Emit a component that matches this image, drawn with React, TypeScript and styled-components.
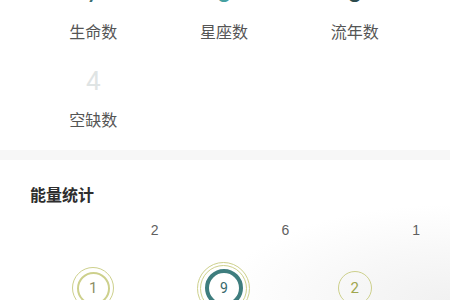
import React from "react";
import styled, { createGlobalStyle } from "styled-components";

const GlobalStyle = createGlobalStyle`
  html, body {
    margin: 0;
    padding: 0;
    background: #ffffff;
    overflow: hidden;
  }
  body {
    font-family: "Noto Sans CJK SC", "Noto Sans", sans-serif;
  }
`;

const Page = styled.div`
  width: 450px;
  height: 300px;
  overflow: hidden;
  background: #ffffff;
`;

const StatsGrid = styled.div`
  margin-top: -19px;
  padding: 0 30px 21px 28px;
  display: grid;
  grid-template-columns: repeat(3, 1fr);
  row-gap: 28px;
`;

const StatCell = styled.div`
  display: flex;
  flex-direction: column;
  align-items: center;
`;

const StatNumber = styled.div<{ $color: string }>`
  font-family: Roboto, "DejaVu Sans", sans-serif;
  font-size: 26px;
  line-height: 24px;
  height: 26px;
  color: ${(p) => p.$color};
`;

const StatLabel = styled.div`
  margin-top: 14px;
  font-size: 16px;
  line-height: 20px;
  color: #555555;
`;

const Divider = styled.div`
  height: 10px;
  background: #f7f7f7;
`;

const EnergySection = styled.div`
  height: 140px;
  padding-top: 23px;
  box-sizing: border-box;
  background: radial-gradient(
    ellipse 60% 80% at 100% 100%,
    #f1f1f1 0%,
    #f8f8f8 45%,
    #ffffff 85%
  );
`;

const Title = styled.div`
  padding-left: 30px;
  font-size: 16px;
  line-height: 22px;
  font-weight: 700;
  color: #2e2e2e;
`;

const CountRow = styled.div`
  margin-top: 16px;
  padding: 0 30px 0 28px;
  display: grid;
  grid-template-columns: repeat(3, 1fr);
`;

const Count = styled.div`
  text-align: right;
  font-family: "Liberation Sans", Arial, sans-serif;
  font-size: 14px;
  line-height: 18px;
  color: #5f5f5f;
`;

const CircleRow = styled.div`
  margin-top: 21px;
  padding: 0 30px 0 28px;
  display: grid;
  grid-template-columns: repeat(3, 1fr);
`;

const CircleSlot = styled.div`
  height: 56px;
  display: flex;
  align-items: center;
  justify-content: center;
`;

const Ring = styled.div<{ $size: number; $width: number; $color: string }>`
  width: ${(p) => p.$size}px;
  height: ${(p) => p.$size}px;
  box-sizing: border-box;
  border-radius: 50%;
  border: ${(p) => p.$width}px solid ${(p) => p.$color};
  display: flex;
  align-items: center;
  justify-content: center;
`;

const Digit = styled.span<{ $color: string; $size?: number }>`
  font-family: Roboto, "DejaVu Sans", sans-serif;
  font-size: ${(p) => p.$size ?? 15}px;
  color: ${(p) => p.$color};
`;

const LIME = "#cdd08c";
const TEAL = "#3e7d7e";

const stats = [
  { value: "7", label: "生命数", color: "#3b6e70" },
  { value: "3", label: "星座数", color: "#46a0a0" },
  { value: "8", label: "流年数", color: "#2d4b4c" },
  { value: "4", label: "空缺数", color: "#dfe4e4" },
];

export default function App() {
  return (
    <Page>
      <GlobalStyle />
      <StatsGrid>
        {stats.map((s) => (
          <StatCell key={s.label}>
            <StatNumber $color={s.color}>{s.value}</StatNumber>
            <StatLabel>{s.label}</StatLabel>
          </StatCell>
        ))}
      </StatsGrid>
      <Divider />
      <EnergySection>
        <Title>能量统计</Title>
        <CountRow>
          <Count>2</Count>
          <Count>6</Count>
          <Count>1</Count>
        </CountRow>
        <CircleRow>
          <CircleSlot>
            <Ring $size={42} $width={1.5} $color={LIME}>
              <Ring $size={33} $width={2} $color={LIME}>
                <Digit $color="#8d8e63">1</Digit>
              </Ring>
            </Ring>
          </CircleSlot>
          <CircleSlot>
            <Ring $size={53} $width={1.5} $color={LIME}>
              <Ring $size={47} $width={1.5} $color={LIME}>
                <Ring $size={38} $width={4} $color={TEAL}>
                  <Digit $color="#35686a" $size={14}>9</Digit>
                </Ring>
              </Ring>
            </Ring>
          </CircleSlot>
          <CircleSlot>
            <Ring $size={34} $width={1.5} $color={LIME}>
              <Digit $color="#9fa64e">2</Digit>
            </Ring>
          </CircleSlot>
        </CircleRow>
      </EnergySection>
    </Page>
  );
}
